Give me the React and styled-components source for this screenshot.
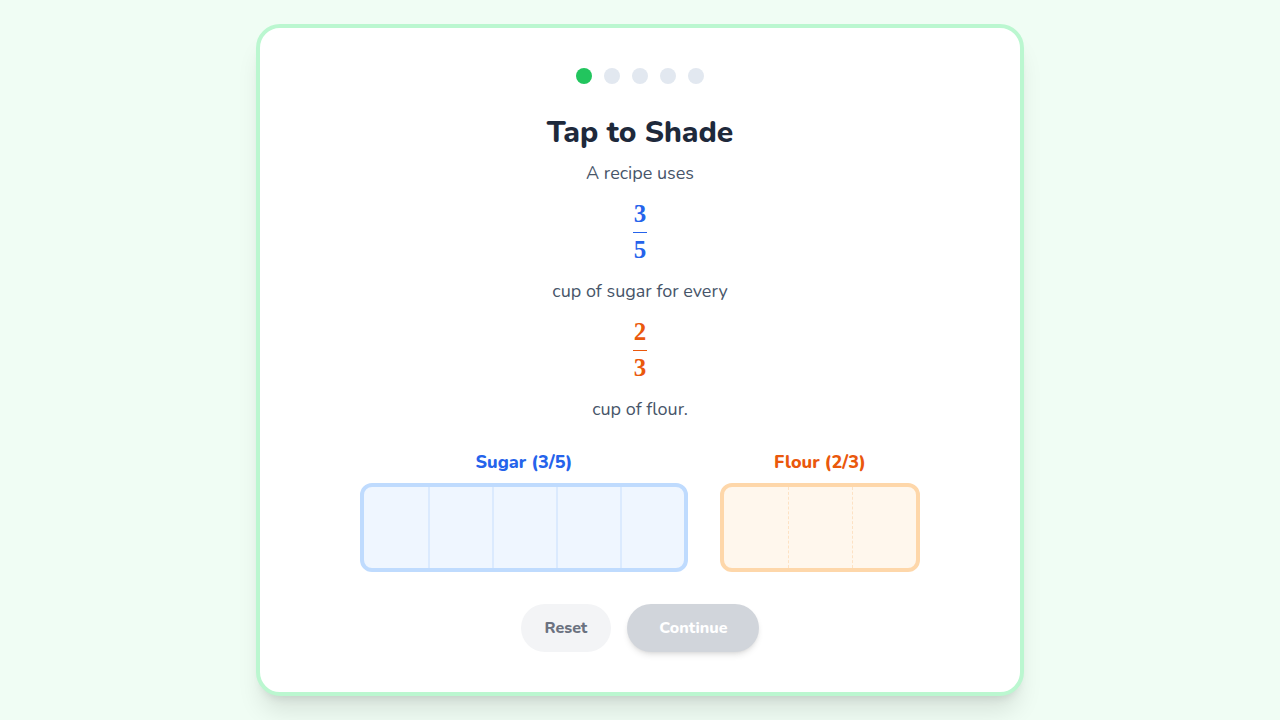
import styled, { createGlobalStyle } from "styled-components";

const GlobalStyle = createGlobalStyle`
  * { box-sizing: border-box; }
  body {
    margin: 0;
    background: #f0fdf4;
    font-family: "Nunito", "Lato", "Noto Sans", sans-serif;
  }
`;

const Page = styled.div`
  min-height: 100vh;
  display: flex;
  align-items: center;
  justify-content: center;
  padding: 24px;
`;

const Card = styled.div`
  width: 768px;
  background: #ffffff;
  border: 4px solid #bbf7d0;
  border-radius: 24px;
  padding: 40px;
  box-shadow: 0 20px 25px -5px rgba(0, 0, 0, 0.1), 0 8px 10px -6px rgba(0, 0, 0, 0.1);
  display: flex;
  flex-direction: column;
  align-items: center;
`;

const Dots = styled.div`
  display: flex;
  gap: 12px;
`;

const Dot = styled.span`
  width: 16px;
  height: 16px;
  border-radius: 50%;
  background: ${(p) => (p.$active ? "#22c55e" : "#e2e8f0")};
`;

const Title = styled.h1`
  margin: 31px 0 8px;
  font-size: 30px;
  line-height: 36px;
  font-weight: 800;
  color: #1e293b;
`;

const Text = styled.p`
  margin: 0;
  font-size: 18px;
  line-height: 28px;
  color: #475569;
`;

const Fraction = styled.div`
  display: flex;
  flex-direction: column;
  align-items: center;
  margin: 13px 0 13px;
  font-family: "Liberation Serif", "DejaVu Serif", serif;
  font-weight: 700;
  font-size: 25px;
  color: ${(p) => p.$color};
`;

const Num = styled.span`
  line-height: 28px;
  padding-bottom: 4px;
`;

const Bar = styled.span`
  width: 14px;
  height: 1px;
  background: ${(p) => p.$color};
`;

const Den = styled.span`
  line-height: 28px;
  padding-top: 3px;
`;

const Models = styled.div`
  display: flex;
  gap: 32px;
  margin-top: 25px;
`;

const Model = styled.div`
  display: flex;
  flex-direction: column;
  align-items: center;
  gap: 7px;
`;

const Label = styled.div`
  font-size: 18px;
  line-height: 28px;
  font-weight: 800;
  color: ${(p) => p.$color};
`;

const Strip = styled.div`
  display: flex;
  height: 89px;
  border: 4px solid ${(p) => p.$border};
  background: ${(p) => p.$bg};
  border-radius: 12px;
  overflow: hidden;
`;

const Cell = styled.div`
  flex: 0 0 64px;
  cursor: pointer;
  border-left: ${(p) => (p.$first ? "none" : p.$divider)};
`;

const Actions = styled.div`
  display: flex;
  gap: 16px;
  margin-top: 32px;
`;

const Button = styled.button`
  height: 48px;
  padding: 0 ${(p) => (p.$primary ? "32px" : "24px")};
  border: none;
  border-radius: 999px;
  font-family: inherit;
  font-size: 16px;
  font-weight: 800;
  background: ${(p) => (p.$primary ? "#d1d5db" : "#f3f4f6")};
  color: ${(p) => (p.$primary ? "#ffffff" : "#6b7280")};
  box-shadow: ${(p) =>
    p.$primary ? "0 4px 6px -1px rgba(0,0,0,0.1), 0 2px 4px -2px rgba(0,0,0,0.1)" : "none"};
  cursor: ${(p) => (p.$primary ? "not-allowed" : "pointer")};
`;

const models = [
  {
    label: "Sugar (3/5)",
    parts: 5,
    color: "#2563eb",
    border: "#bfdbfe",
    bg: "#eff6ff",
    divider: "2px solid #dbeafe",
  },
  {
    label: "Flour (2/3)",
    parts: 3,
    color: "#ea580c",
    border: "#fed7aa",
    bg: "#fff7ed",
    divider: "1px dashed #fde2c4",
  },
];

export default function App() {
  return (
    <>
      <GlobalStyle />
      <Page>
        <Card>
          <Dots>
            {[0, 1, 2, 3, 4].map((i) => (
              <Dot key={i} $active={i === 0} />
            ))}
          </Dots>
          <Title>Tap to Shade</Title>
          <Text>A recipe uses</Text>
          <Fraction $color="#2563eb">
            <Num>3</Num>
            <Bar $color="#2563eb" />
            <Den>5</Den>
          </Fraction>
          <Text>cup of sugar for every</Text>
          <Fraction $color="#ea580c">
            <Num>2</Num>
            <Bar $color="#ea580c" />
            <Den>3</Den>
          </Fraction>
          <Text>cup of flour.</Text>
          <Models>
            {models.map((m) => (
              <Model key={m.label}>
                <Label $color={m.color}>{m.label}</Label>
                <Strip $border={m.border} $bg={m.bg}>
                  {Array.from({ length: m.parts }).map((_, i) => (
                    <Cell key={i} $first={i === 0} $divider={m.divider} />
                  ))}
                </Strip>
              </Model>
            ))}
          </Models>
          <Actions>
            <Button>Reset</Button>
            <Button $primary disabled>
              Continue
            </Button>
          </Actions>
        </Card>
      </Page>
    </>
  );
}
